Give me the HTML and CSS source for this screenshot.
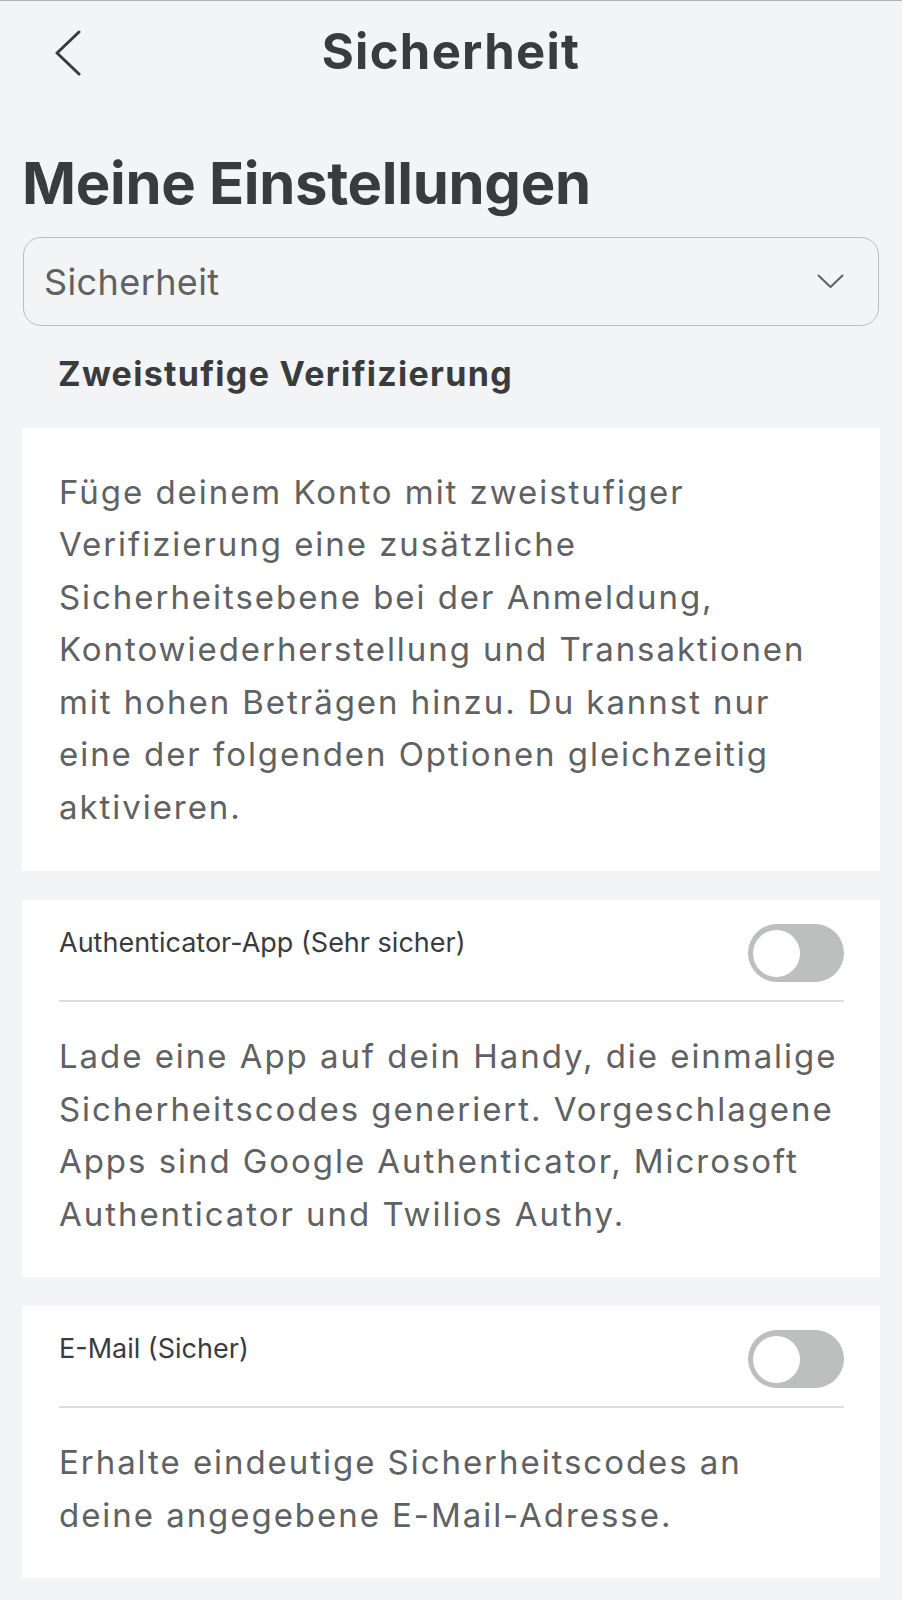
FILE: index.html
```html
<!DOCTYPE html>
<html lang="de">
<head>
    <meta charset="UTF-8">
    <meta name="viewport" content="width=device-width, initial-scale=1.0">
    <title>Sicherheit</title>
    <link rel="stylesheet" href="styles.css">
</head>
<body>
    <div class="page">
        <header class="topbar">
            <button class="btn-back" aria-label="Zurück">
                <svg width="26" height="46" viewBox="0 0 26 46">
                    <polyline points="24,2 2,23 24,44" fill="none" stroke="#393b3d" stroke-width="3" stroke-linecap="round" stroke-linejoin="round"/>
                </svg>
            </button>
            <h2 class="topbar-title">Sicherheit</h2>
            <span></span>
        </header>

        <h1 class="page-title">Meine Einstellungen</h1>

        <div class="select">
            <span class="select-value">Sicherheit</span>
            <svg class="select-arrow" width="27" height="15" viewBox="0 0 27 15">
                <polyline points="1.5,1.5 13.5,13 25.5,1.5" fill="none" stroke="#606162" stroke-width="2" stroke-linecap="round" stroke-linejoin="round"/>
            </svg>
        </div>

        <h3 class="section-title">Zweistufige Verifizierung</h3>

        <div class="card card-intro">
            <p class="card-text">Füge deinem Konto mit zweistufiger<br>Verifizierung eine zusätzliche<br>Sicherheitsebene bei der Anmeldung,<br>Kontowiederherstellung und Transaktionen<br>mit hohen Beträgen hinzu. Du kannst nur<br>eine der folgenden Optionen gleichzeitig<br>aktivieren.</p>
        </div>

        <div class="card option">
            <div class="option-head">
                <span class="option-label">Authenticator-App (Sehr sicher)</span>
                <span class="toggle"><span class="toggle-knob"></span></span>
            </div>
            <p class="card-text option-text">Lade eine App auf dein Handy, die einmalige<br>Sicherheitscodes generiert. Vorgeschlagene<br>Apps sind Google Authenticator, Microsoft<br>Authenticator und Twilios Authy.</p>
        </div>

        <div class="card option">
            <div class="option-head">
                <span class="option-label">E-Mail (Sicher)</span>
                <span class="toggle"><span class="toggle-knob"></span></span>
            </div>
            <p class="card-text option-text">Erhalte eindeutige Sicherheitscodes an<br>deine angegebene E-Mail-Adresse.</p>
        </div>
    </div>
</body>
</html>
```

FILE: styles.css
```css
/* General */
body {
    font-family: 'Inter', 'Noto Sans', sans-serif;
    margin: 0;
    padding: 0;
    background: #f2f4f5;
    color: #393b3d;
    border-top: 1px solid #b4b4b4;
}

.page {
    padding: 0 22px 22px;
}

/* Top bar */
.topbar {
    display: grid;
    grid-template-columns: 1fr auto 1fr;
    align-items: center;
    height: 104px;
}

.btn-back {
    justify-self: start;
    display: flex;
    margin-left: 33px;
    padding: 0;
    border: none;
    background: none;
    cursor: pointer;
}

.topbar-title {
    margin: 0 0 2px;
    font-size: 49px;
    font-weight: 700;
    line-height: 1.2;
    letter-spacing: 1.3px;
}

/* Headings */
.page-title {
    margin: 43px 0 19px 0;
    font-size: 58px;
    font-weight: 700;
    line-height: 70px;
    letter-spacing: -0.3px;
}

.section-title {
    margin: 28px 0 33px 36px;
    font-size: 34px;
    font-weight: 700;
    line-height: 1.2;
    letter-spacing: 1.3px;
}

/* Select */
.select {
    box-sizing: border-box;
    display: flex;
    align-items: center;
    justify-content: space-between;
    height: 89px;
    margin: 0 1px;
    padding: 0 34px 0 20px;
    border: 1.5px solid #bdbebe;
    border-radius: 18px;
}

.select-value {
    font-size: 36px;
    color: #606162;
    letter-spacing: 0.4px;
}

/* Cards */
.card {
    background: #ffffff;
    margin-bottom: 29px;
}

.card-intro {
    padding: 38px 10px 38px 37px;
}

.card-text {
    margin: 0;
    font-size: 33px;
    line-height: 52.5px;
    color: #606162;
    letter-spacing: 1.95px;
    white-space: nowrap;
}

.option {
    padding: 0 36px 37px 37px;
}

.option-head {
    display: flex;
    justify-content: space-between;
    align-items: flex-start;
    padding: 24px 0 18px;
    border-bottom: 2px solid #dcdcdc;
}

.option-label {
    margin-top: 3px;
    font-size: 27px;
    line-height: 1.2;
}

.option-text {
    padding-top: 28px;
}

/* Toggle */
.toggle {
    box-sizing: border-box;
    display: flex;
    align-items: center;
    width: 96px;
    height: 58px;
    padding: 0 5px;
    border-radius: 29px;
    background: #bdbebe;
}

.toggle-knob {
    width: 47px;
    height: 47px;
    border-radius: 50%;
    background: #ffffff;
}
```
